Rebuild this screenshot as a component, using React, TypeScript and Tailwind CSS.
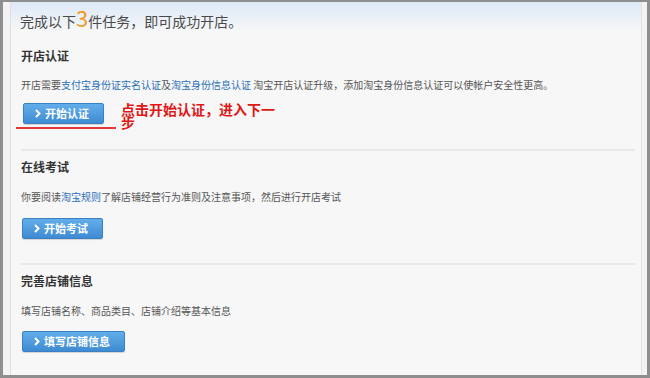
import React from 'react';

const font = { fontFamily: '"Noto Sans CJK SC", "Noto Sans", sans-serif' };

function StepButton({ label }: { label: string }) {
  return (
    <button
      type="button"
      className="h-[21px] pl-[11px] pr-[14px] flex items-center gap-[4px] rounded-[2px] border border-[#3b80c4] bg-gradient-to-b from-[#62aeea] to-[#3f8bd3] text-white text-[11px] font-bold leading-none shadow-[0_1px_1px_rgba(0,0,0,0.15)]"
    >
      <svg width="6" height="9" viewBox="0 0 6 9" fill="none">
        <path d="M1 1l3.5 3.5L1 8" stroke="white" strokeWidth="2" />
      </svg>
      {label}
    </button>
  );
}

function Link({ children }: { children: React.ReactNode }) {
  return <span className="text-[#2a6fb8]">{children}</span>;
}

export default function App() {
  return (
    <div style={font} className="w-[650px] h-[378px] bg-[#8e8e8e] pl-[3px] pr-[3px] pt-[2px] pb-[3px]">
      <div className="h-full bg-[#f3f3f3] pl-[7px] pr-[5px] flex">
        <div className="flex-1 bg-[#f7f7f7] border-l border-r border-[#e0e0e0] flex flex-col">
          {/* header */}
          <div className="h-[30px] bg-gradient-to-b from-[#dde9f7] to-[#f7f7f7] pl-[9px] flex items-center">
            <span className="text-[14px] text-[#4a4a4a] leading-none">
              完成以下<span className="text-[22px] text-[#f39a1e]">3</span>件任务，即可成功开店。
            </span>
          </div>

          {/* section 1 */}
          <div className="pl-[10px] pr-[6px]">
            <div className="pt-[16px] text-[12px] font-bold text-[#333] leading-[16px]">开店认证</div>
            <div className="mt-[15px] text-[10px] text-[#555] leading-[12px] whitespace-nowrap">
              开店需要<Link>支付宝身份证实名认证</Link>及<Link>淘宝身份信息认证</Link> 淘宝开店认证升级，添加淘宝身份信息认证可以使帐户安全性更高。
            </div>
            <div className="mt-[12px] flex items-start">
              <div className="flex flex-col">
                <div className="pl-[2px]">
                  <StepButton label="开始认证" />
                </div>
                <div className="mt-[3px] -ml-[5px] w-[100px] h-[2px] bg-[#e23a3a]" />
              </div>
              <div className="ml-[5px] w-[158px] text-[14px] font-bold text-[#e01818] leading-[13px]">
                点击开始认证，进入下一步
              </div>
            </div>
            <div className="mt-[20px] h-[2px] bg-[#e8e8e8]" />
          </div>

          {/* section 2 */}
          <div className="pl-[10px] pr-[6px]">
            <div className="pt-[8px] text-[12px] font-bold text-[#333] leading-[16px]">在线考试</div>
            <div className="mt-[16px] text-[10px] text-[#555] leading-[12px]">
              你要阅读<Link>淘宝规则</Link>了解店铺经营行为准则及注意事项，然后进行开店考试
            </div>
            <div className="mt-[15px] pl-[1px]">
              <StepButton label="开始考试" />
            </div>
            <div className="mt-[24px] h-[2px] bg-[#e8e8e8]" />
          </div>

          {/* section 3 */}
          <div className="pl-[10px] pr-[6px]">
            <div className="pt-[8px] text-[12px] font-bold text-[#333] leading-[16px]">完善店铺信息</div>
            <div className="mt-[16px] text-[10px] text-[#555] leading-[12px]">
              填写店铺名称、商品类目、店铺介绍等基本信息
            </div>
            <div className="mt-[14px] pl-[1px]">
              <StepButton label="填写店铺信息" />
            </div>
          </div>
        </div>
      </div>
    </div>
  );
}
